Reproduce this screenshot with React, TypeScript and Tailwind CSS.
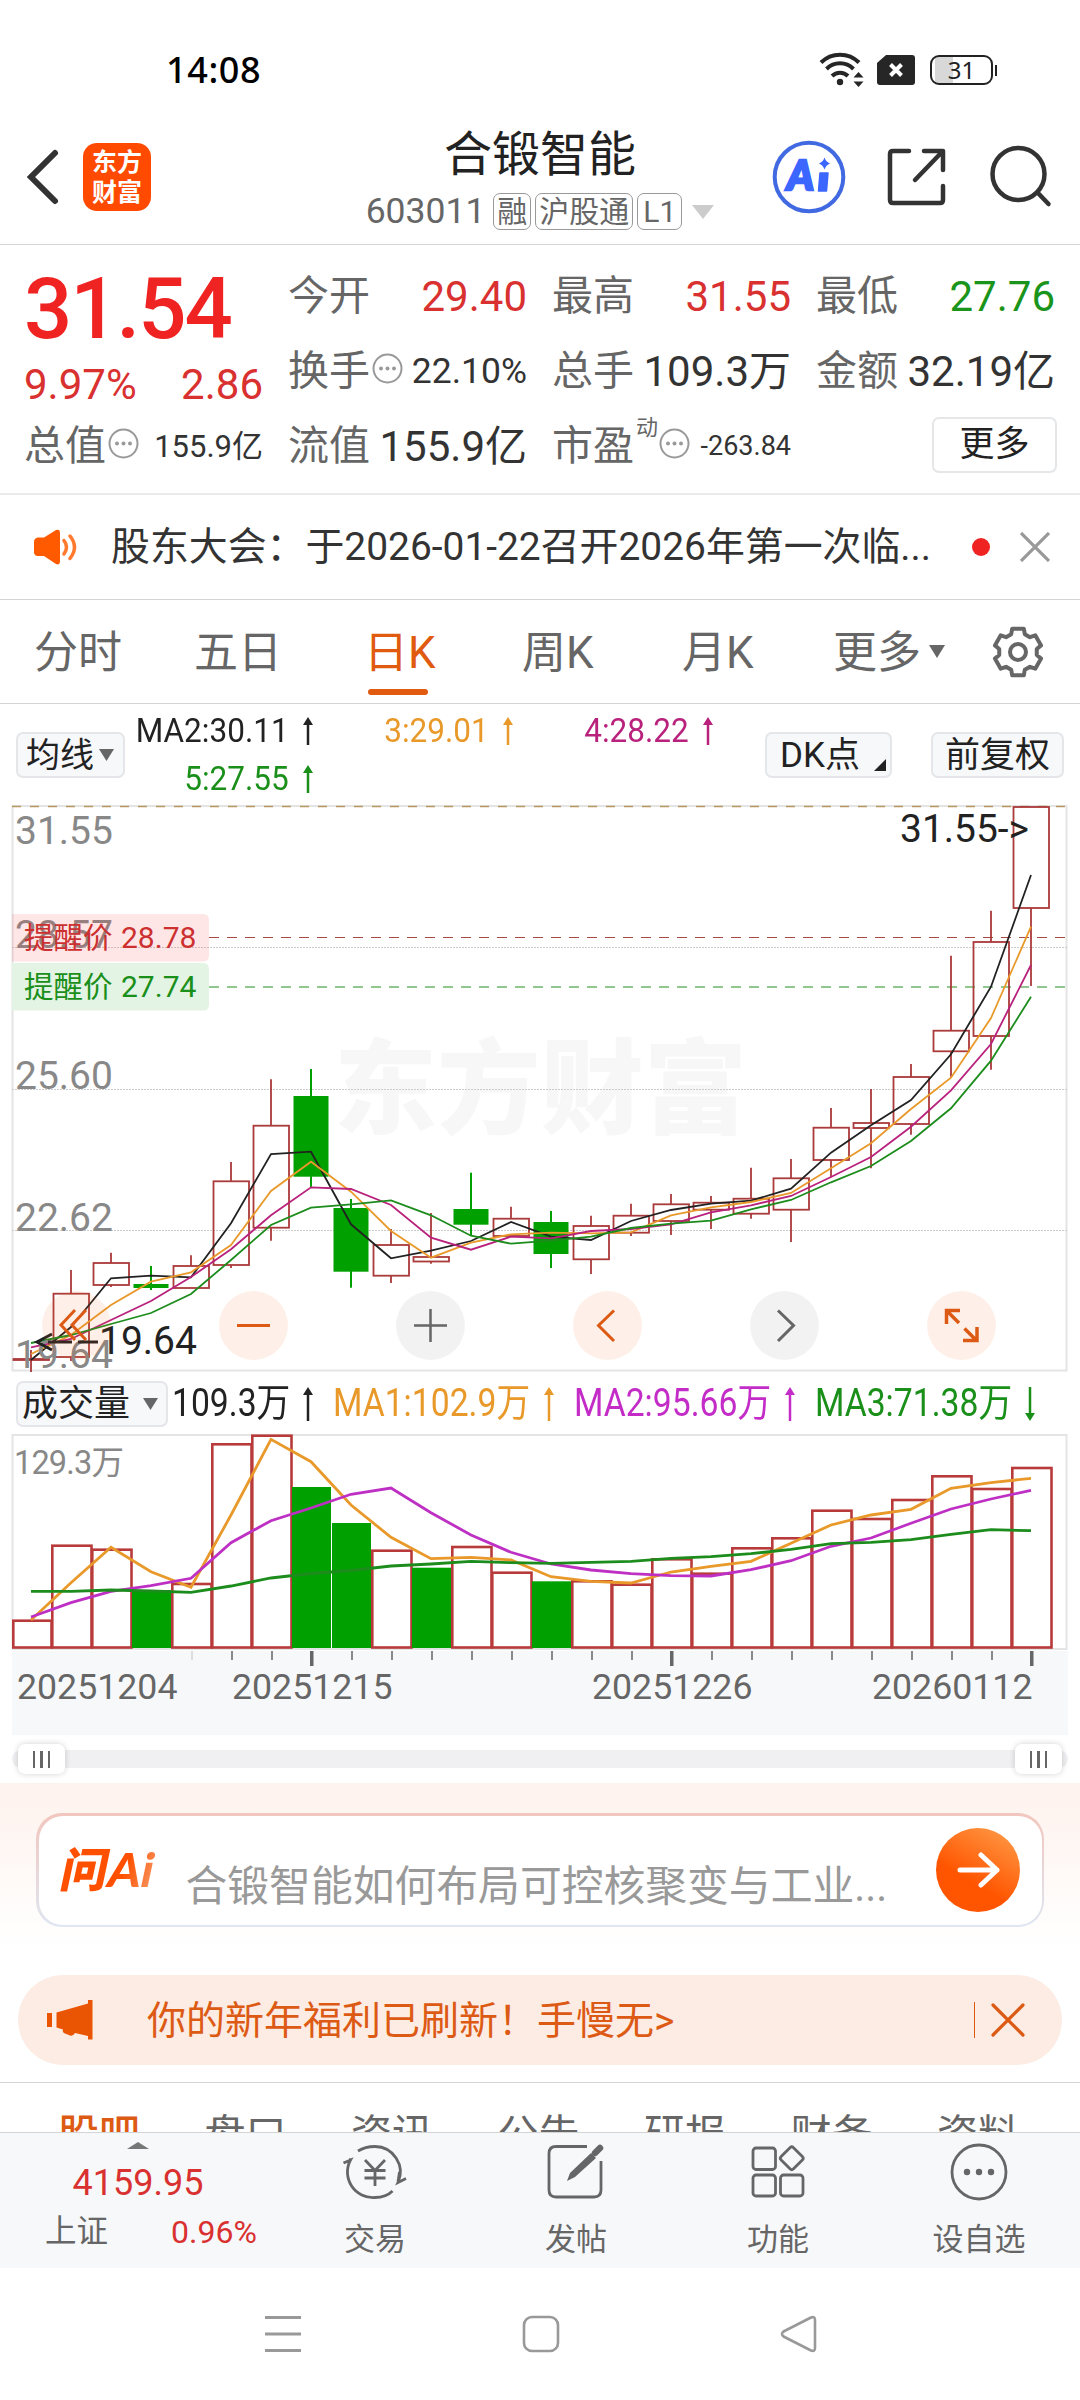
import type { ReactNode } from 'react';

interface Candle {
  high: number;
  top: number;
  bottom: number;
  low: number;
  down?: boolean;
}

// Values are canvas y positions, one entry per trading day
const candles: Candle[] = [
  { high: 1350, top: 1359, bottom: 1360, low: 1372 },
  { high: 1270, top: 1293.7, bottom: 1357, low: 1361 },
  { high: 1252.7, top: 1263, bottom: 1285, low: 1287 },
  { high: 1266, top: 1284, bottom: 1288, low: 1290, down: true },
  { high: 1255.3, top: 1266, bottom: 1288, low: 1288 },
  { high: 1162, top: 1181.3, bottom: 1265, low: 1268 },
  { high: 1079.3, top: 1125.7, bottom: 1227.7, low: 1240.7 },
  { high: 1069, top: 1096, bottom: 1176.7, low: 1187, down: true },
  { high: 1199, top: 1208, bottom: 1271.7, low: 1287.7, down: true },
  { high: 1229, top: 1245, bottom: 1275.7, low: 1283 },
  { high: 1213, top: 1257, bottom: 1261.5, low: 1263.7 },
  { high: 1172.7, top: 1209, bottom: 1224.7, low: 1235.7, down: true },
  { high: 1206.7, top: 1218.7, bottom: 1236, low: 1236 },
  { high: 1211, top: 1222, bottom: 1254, low: 1268, down: true },
  { high: 1215.7, top: 1226, bottom: 1259.3, low: 1274 },
  { high: 1203.7, top: 1215.7, bottom: 1232.7, low: 1236 },
  { high: 1194, top: 1204.3, bottom: 1221, low: 1235 },
  { high: 1196, top: 1202.7, bottom: 1209.7, low: 1229 },
  { high: 1167.7, top: 1198.7, bottom: 1213.7, low: 1218.7 },
  { high: 1159, top: 1178.3, bottom: 1209.7, low: 1242 },
  { high: 1108, top: 1127.7, bottom: 1160, low: 1177.3 },
  { high: 1089, top: 1123, bottom: 1128, low: 1168.3 },
  { high: 1064, top: 1077, bottom: 1124, low: 1134.7 },
  { high: 955.7, top: 1030.7, bottom: 1051.3, low: 1077.3 },
  { high: 910.7, top: 942, bottom: 1036, low: 1069.7 },
  { high: 807, top: 807, bottom: 908, low: 986 },
];

const priceLines = [
  {
    color: '#222222',
    values: [1360, 1327, 1278.3, 1275.7, 1277.3, 1223.3, 1154, 1151.7, 1224.3, 1258.3, 1250.7, 1241, 1222, 1236.7, 1240, 1221, 1210, 1203.7, 1200.7, 1188.7, 1152.7, 1125.3, 1100, 1054.3, 986.7, 875],
  },
  {
    color: '#e8992a',
    values: [1354, 1335, 1305, 1281.7, 1272.3, 1245, 1191, 1161.7, 1191.7, 1231, 1257.7, 1242.7, 1234.3, 1232.7, 1233.3, 1232.3, 1215.3, 1207.3, 1202, 1193, 1168.3, 1143.3, 1109, 1077.7, 1018, 926.7],
  },
  {
    color: '#b8217c',
    values: [1347.3, 1339, 1320, 1301, 1277, 1249.3, 1215.3, 1187.3, 1189, 1205, 1237.7, 1249.7, 1236.7, 1238.3, 1231, 1229, 1224.3, 1212.3, 1205.3, 1196, 1177, 1157, 1126.7, 1090.3, 1044, 965],
  },
  {
    color: '#1c8c1c',
    values: [1343, 1335, 1324, 1313, 1294, 1260, 1225, 1207.7, 1204.3, 1200.3, 1215.3, 1235.7, 1243.7, 1240.7, 1236.7, 1228, 1223.7, 1220.7, 1209.3, 1200, 1182.3, 1166, 1141, 1108.3, 1060.7, 996.7],
  },
];

const volumes = [1620.7, 1545.7, 1549.7, 1590, 1584, 1444.3, 1435.7, 1487, 1523, 1550.7, 1567.7, 1547, 1572.7, 1581.3, 1581.3, 1584.7, 1559.3, 1573.7, 1548.3, 1538.3, 1510.7, 1519, 1500, 1476.3, 1489, 1468];
const volumeDown = [3, 7, 8, 10, 13];

const volumeLines = [
  {
    color: '#e8992a',
    values: [1620, 1582.7, 1547.3, 1571.7, 1587.3, 1515, 1439.3, 1461.7, 1505, 1537.3, 1558.7, 1557.3, 1560, 1576.7, 1581.3, 1583, 1572, 1566.3, 1561.3, 1543.3, 1525, 1515, 1509.3, 1488.3, 1482.7, 1478.3],
  },
  {
    color: '#be30c4',
    values: [1617, 1602.7, 1591.3, 1585.7, 1578.3, 1542.7, 1520.7, 1508, 1494.3, 1488, 1512.7, 1535, 1552.3, 1564, 1570, 1573.7, 1575.7, 1576, 1569.7, 1560.7, 1546.3, 1538, 1523.3, 1509, 1499, 1490.3],
  },
  {
    color: '#1c8c1c',
    values: [1591.3, 1591.3, 1590, 1591, 1592.3, 1586, 1578, 1573.5, 1570.5, 1566, 1564, 1561.3, 1562.7, 1563.3, 1562.3, 1561.3, 1558.3, 1556.7, 1553.7, 1549.3, 1543.7, 1542.3, 1539.7, 1534.3, 1529.7, 1530.7],
  },
];

const cx = (i: number) => 31 + i * 40;
const toPoints = (values: number[]) => values.map((v, i) => `${cx(i)},${v}`).join(' ');

function StatusBar() {
  return (
    <div className="flex h-[92px] items-center justify-between pt-[48px] pr-[83px] pl-[166px]">
      <span className="font-['Noto_Sans'] text-[36px] leading-none font-medium tracking-[0.600px] text-black">14:08</span>
      <div className="flex items-center">
        <svg width="46" height="36" viewBox="0 0 46 36" fill="none" stroke="#262626" strokeWidth="4">
          <path d="M2 10.500a27 27 0 0 1 38 0" />
          <path d="M7.500 17a19 19 0 0 1 27 0" />
          <path d="M13 24a11.500 11.500 0 0 1 16 0" />
          <circle cx="21" cy="30" r="3.200" fill="#262626" stroke="none" />
          <path d="M39.500 20l5 5.500h-10zM39.500 35l5 -5.500h-10z" fill="#262626" stroke="none" />
        </svg>
        <svg className="ml-[12px]" width="38" height="30" viewBox="0 0 38 30">
          <path d="M9 0H35a3 3 0 0 1 3 3V27a3 3 0 0 1 -3 3H3a3 3 0 0 1 -3 -3V8z" fill="#262626" />
          <path d="M13.500 9.500l11 11M24.500 9.500l-11 11" stroke="#fff" strokeWidth="4" />
        </svg>
        <div className="ml-[15px] flex h-[30px] w-[63px] items-center justify-center rounded-[9px] border-2 border-[#222] bg-[linear-gradient(90deg,#fff_3px,#d8d8d8_3px,#d8d8d8_21px,#fff_21px)]">
          <span className="font-['Noto_Sans'] text-[24px] leading-none text-[#222]">31</span>
        </div>
        <div className="ml-[2px] h-[11px] w-[2px] bg-[#222]" />
      </div>
    </div>
  );
}

function Tag({ children }: { children: ReactNode }) {
  return (
    <span className="flex h-[37px] items-center rounded-[7px] border border-[#999] px-[3px] text-[30px] leading-none text-[#666]">
      {children}
    </span>
  );
}

function Header() {
  return (
    <header className="grid h-[153px] grid-cols-[340px_1fr_340px] border-b border-[#d4d4d4]">
      <div className="flex items-center pt-[18px] pl-[25px]">
        <svg width="36" height="58" viewBox="0 0 36 58" fill="none" stroke="#333" strokeWidth="6" strokeLinecap="round">
          <path d="M30 5L6 29l24 24" />
        </svg>
        <div className="ml-[22px] flex h-[68px] w-[68px] flex-col items-center justify-center gap-[5px] rounded-[14px] bg-[#ff4a00] text-[25px] leading-[25px] font-bold text-white">
          <span>东方</span>
          <span>财富</span>
        </div>
      </div>
      <div className="flex flex-col items-center pt-[39px]">
        <h1 className="text-[48px] leading-[48px] whitespace-nowrap text-[#222]">合锻智能</h1>
        <div className="mt-[14px] flex items-center gap-[4px] whitespace-nowrap">
          <span className="mr-[4px] text-[35.500px] leading-none text-[#666]">603011</span>
          <Tag>融</Tag>
          <Tag>沪股通</Tag>
          <Tag>
            <span className="px-[2px]">L1</span>
          </Tag>
          <svg className="ml-[6px]" width="22" height="14" viewBox="0 0 22 14">
            <path d="M0 0h22L11 14z" fill="#ccc" />
          </svg>
        </div>
      </div>
      <div className="flex items-center pt-[18px] pl-[32px]">
        <svg width="74" height="74" viewBox="0 0 74 74">
          <circle cx="37" cy="37" r="34.300" fill="none" stroke="#4169e1" strokeWidth="4" />
          <text x="15" y="49.500" fontFamily="Lato" fontWeight="900" fontStyle="italic" fontSize="41" fill="#3b66ff" stroke="#3b66ff" strokeWidth="2.500">A</text>
          <path d="M48 33h8l-1.500 18h-8z" fill="#3b66ff" stroke="#3b66ff" strokeWidth="1.500" strokeLinejoin="round" />
          <path d="M52.500 17.500q1.500 4.500 5.500 6q-4 1.500 -5.500 6q-1.500 -4.500 -5.500 -6q4 -1.500 5.500 -6z" fill="#3b66ff" />
        </svg>
        <svg className="ml-[41px]" width="60" height="60" viewBox="0 0 60 60" fill="none" stroke="#333" strokeWidth="4.500" strokeLinecap="round" strokeLinejoin="round">
          <path d="M22 4H6q-3 0 -3 3V53q0 3 3 3H53q3 0 3 -3V39" />
          <path d="M37 4H56V23M54 6L28 33" />
        </svg>
        <svg className="ml-[41px]" width="64" height="64" viewBox="0 0 64 64" fill="none" stroke="#333" strokeWidth="4.500" strokeLinecap="round">
          <circle cx="30.500" cy="29" r="26" />
          <path d="M50 48L60.500 59" />
        </svg>
      </div>
    </header>
  );
}

function Dots() {
  return (
    <svg className="shrink-0" width="31" height="31" viewBox="0 0 31 31">
      <circle cx="15.500" cy="15.500" r="14" fill="none" stroke="#999" strokeWidth="2" />
      <g fill="#999">
        <circle cx="9" cy="15.500" r="2" />
        <circle cx="15.500" cy="15.500" r="2" />
        <circle cx="22" cy="15.500" r="2" />
      </g>
    </svg>
  );
}

interface StatProps {
  label: string;
  value: string;
  valueClass?: string;
  dots?: boolean;
}

function Stat({ label, value, valueClass = 'text-[42px] text-[#333]', dots }: StatProps) {
  return (
    <div className="flex h-[75px] items-center whitespace-nowrap">
      <span className="-ml-[1px] text-[41px] leading-none text-[#666]">{label}</span>
      {dots && (
        <span className="mb-[7px] ml-[2px]">
          <Dots />
        </span>
      )}
      <span className={`ml-auto leading-none ${valueClass}`}>{value}</span>
    </div>
  );
}

function QuotePanel() {
  return (
    <section className="grid h-[250px] grid-cols-4 content-start gap-x-[26px] border-b-2 border-[#ebebeb] px-[25px] pt-[14px]">
      <div className="row-span-2 h-[150px]">
        <div className="-ml-[1px] pt-[12px] text-[85px] leading-[76px] font-medium tracking-[-2px] text-[#f02323]">31.54</div>
        <div className="-ml-[1px] flex justify-between pt-[17px] text-[42px] leading-[42px] text-[#d93030]">
          <span>9.97%</span>
          <span>2.86</span>
        </div>
      </div>
      <Stat label="今开" value="29.40" valueClass="text-[42px] text-[#d93030]" />
      <Stat label="最高" value="31.55" valueClass="text-[42px] text-[#d93030]" />
      <Stat label="最低" value="27.76" valueClass="text-[42px] text-[#1a941a]" />
      <Stat label="换手" value="22.10%" valueClass="text-[35.500px] text-[#333]" dots />
      <Stat label="总手" value="109.3万" />
      <Stat label="金额" value="32.19亿" />
      <Stat label="总值" value="155.9亿" valueClass="text-[31px] text-[#333]" dots />
      <Stat label="流值" value="155.9亿" />
      <div className="flex h-[75px] items-center">
        <span className="-ml-[1px] text-[41px] leading-none text-[#666]">市盈</span>
        <span className="mb-[38px] ml-[2px] text-[22px] leading-none text-[#666]">动</span>
        <span className="mb-[7px] ml-[1px]">
          <Dots />
        </span>
        <span className="ml-auto text-[27px] leading-none text-[#333]">-263.84</span>
      </div>
      <div className="flex h-[75px] items-center justify-end">
        <button className="-mr-[2px] mb-[4px] h-[56px] w-[125px] rounded-[7px] border-2 border-[#e4e6e8] text-[35px] leading-none text-[#222]">更多</button>
      </div>
    </section>
  );
}

function NewsBar() {
  return (
    <section className="flex h-[105px] items-center border-b border-[#d4d4d4] pl-[33px]">
      <svg width="46" height="36" viewBox="0 0 46 36">
        <path d="M1 13q0 -4 4 -4.500h6L23 1q4 -1.500 4 3V32q0 4.500 -4 3L11 27H5q-4 0 -4 -4z" fill="#ff5a00" />
        <path d="M31 11.500q5 6.500 0 13.500M37 7q9 11 0 22.500" fill="none" stroke="#ff7a2e" strokeWidth="3.500" strokeLinecap="round" />
      </svg>
      <span className="ml-[32px] w-[830px] text-[38.900px] leading-none whitespace-nowrap text-[#333]">股东大会：于2026-01-22召开2026年第一次临...</span>
      <span className="ml-[31px] h-[18px] w-[18px] rounded-full bg-[#f02323]" />
      <svg className="ml-[30px]" width="30" height="30" viewBox="0 0 30 30" stroke="#999" strokeWidth="3.200">
        <path d="M1 1l28 28M29 1L1 29" />
      </svg>
    </section>
  );
}

function Gear() {
  const pts: string[] = [];
  for (let k = 0; k < 6; k++) {
    for (const [r, d] of [[19, -21], [24, -14], [24, 14], [19, 21]]) {
      const a = ((k * 60 - 90 + d) * Math.PI) / 180;
      pts.push(`${26 + r * Math.cos(a)},${26 + r * Math.sin(a)}`);
    }
  }
  return (
    <svg width="52" height="52" viewBox="0 0 52 52" fill="none" stroke="#666" strokeWidth="4" strokeLinejoin="round">
      <polygon points={pts.join(' ')} />
      <circle cx="26" cy="26" r="8" />
    </svg>
  );
}

function PeriodTabs() {
  return (
    <nav className="flex h-[104px] items-center border-b border-[#d4d4d4] text-[44px] leading-none whitespace-nowrap text-[#666]">
      <span className="mt-[3px] ml-[34px] w-[160px]">分时</span>
      <span className="mt-[3px] w-[170px]">五日</span>
      <span className="relative mt-[3px] w-[158px] text-[#e05a10]">
        日K
        <i className="absolute top-[58px] left-[4px] h-[6px] w-[60px] rounded-full bg-[#e05a10]" />
      </span>
      <span className="mt-[3px] w-[160px]">周K</span>
      <span className="mt-[3px] w-[151px]">月K</span>
      <span className="mt-[3px] w-[96px]">更多</span>
      <svg width="16" height="13" viewBox="0 0 16 13">
        <path d="M0 0h16L8 13z" fill="#666" />
      </svg>
      <span className="ml-[47px]">
        <Gear />
      </span>
    </nav>
  );
}

function Arrow({ h, down }: { h: number; down?: boolean }) {
  return (
    <svg className={down ? 'shrink-0 rotate-180' : 'shrink-0'} width="10" height={h} viewBox={`0 0 10 ${h}`}>
      <path d="M5 0l5 8H0z" fill="currentColor" />
      <path d={`M5 4V${h}`} stroke="currentColor" strokeWidth="2.500" />
    </svg>
  );
}

function MaItem({ text, className }: { text: string; className: string }) {
  return (
    <div className={`flex h-[48px] items-center justify-end gap-[14px] text-[32.500px] leading-none whitespace-nowrap ${className}`}>
      <span className="origin-right scale-x-[0.97]">{text}</span>
      <Arrow h={28} />
    </div>
  );
}

function MaRow() {
  const chip = 'flex h-[46px] items-center rounded-[7px] border-2 border-[#e4e6ea] bg-[#f7f8fa] text-[35px] leading-none whitespace-nowrap text-[#222]';
  return (
    <section className="flex h-[100px] pl-[16px]">
      <div className={`${chip} mt-[28px] w-[109px] pl-[8px]`}>
        <span className="text-[34px]">均线</span>
        <svg className="ml-[5px]" width="15" height="12" viewBox="0 0 15 12">
          <path d="M0 0h15L7.500 12z" fill="#666" />
        </svg>
      </div>
      <div className="-ml-[12px] grid h-[96px] w-[600px] grid-cols-3 pt-[3px]">
        <MaItem text="MA2:30.11" className="text-[#222]" />
        <MaItem text="3:29.01" className="text-[#e8992a]" />
        <MaItem text="4:28.22" className="text-[#b8217c]" />
        <MaItem text="5:27.55" className="text-[#1a8f1a]" />
      </div>
      <div className={`${chip} mt-[28px] ml-[52px] w-[127px] justify-between pr-[4px] pl-[13px]`}>
        <span>DK点</span>
        <svg className="mt-[20px]" width="12" height="12" viewBox="0 0 12 12">
          <path d="M12 0V12H0z" fill="#222" />
        </svg>
      </div>
      <div className={`${chip} mt-[28px] ml-[39px] w-[133px] justify-center`}>前复权</div>
    </section>
  );
}

function CircleButton({ gray, children }: { gray?: boolean; children: ReactNode }) {
  return (
    <button className={gray ? 'h-[69px] w-[69px] rounded-full bg-black/5 text-[#666]' : 'h-[69px] w-[69px] rounded-full bg-[#f26a1b]/10 text-[#dd5a14]'}>
      <svg width="69" height="69" viewBox="0 0 69 69" fill="none" stroke="currentColor" strokeWidth="3">
        {children}
      </svg>
    </button>
  );
}

function PriceChart() {
  return (
    <section className="relative h-[568px]">
      <svg className="block" width="1080" height="568" viewBox="0 804 1080 568" fontFamily="Roboto, 'Noto Sans CJK SC', sans-serif">
        <text x="334" y="1126" fontSize="103" fontWeight="900" fill="#f7f7f7" textLength="413">东方财富</text>
        <g fill="none" stroke="#e4e4e4" strokeWidth="2">
          <rect x="12.500" y="806" width="1054" height="564.500" />
        </g>
        <path d="M12 947.500H1067M12 1089.500H1067M12 1230.500H1067" stroke="#cccccc" strokeWidth="1" strokeDasharray="2 1" />
        <path d="M12 806.500H1067" stroke="#b89660" strokeWidth="1.500" strokeDasharray="9 9" />
        <path d="M209 937.500H1066" stroke="#a84a42" strokeWidth="1.200" strokeDasharray="10 8" />
        <path d="M209 987H1066" stroke="#6cb46c" strokeWidth="1.500" strokeDasharray="10 8" />
        {candles.map((c, i) => {
          const x = cx(i);
          return c.down ? (
            <g key={i} fill="#00a000">
              <rect x={x - 1} y={c.high} width="2" height={c.low - c.high} />
              <rect x={x - 17.5} y={c.top} width="35" height={c.bottom - c.top} />
            </g>
          ) : (
            <g key={i} fill="none" stroke="#ab3a3a" strokeWidth="1.800">
              <path d={`M${x} ${c.high}V${c.top}M${x} ${c.bottom}V${c.low}`} />
              <rect x={x - 17.5} y={c.top} width="35.500" height={c.bottom - c.top} />
            </g>
          );
        })}
        {priceLines.map((line) => (
          <polyline key={line.color} points={toPoints(line.values)} fill="none" stroke={line.color} strokeWidth="1.800" />
        ))}
        <g fontSize="39" fill="#888888">
          <text x="15" y="844">31.55</text>
          <text x="15" y="947.500">28.57</text>
          <text x="15" y="1089">25.60</text>
          <text x="15" y="1230.500">22.62</text>
          <text x="15" y="1368">19.64</text>
        </g>
        <path d="M12 914H203q6 0 6 6V955.500q0 6 -6 6H12z" fill="#ff5050" fillOpacity="0.140" />
        <path d="M12 963H203q6 0 6 6V1004.500q0 6 -6 6H12z" fill="#e3f4e4" />
        <g fontSize="29.500">
          <text x="24" y="947.500" fill="#cc3030">提醒价</text>
          <text x="121" y="947.500" fontSize="30" fill="#cc3030">28.78</text>
          <text x="24" y="997" fill="#1a8f1a">提醒价</text>
          <text x="121" y="997" fontSize="30" fill="#1a8f1a">27.74</text>
        </g>
        <g fontSize="39" fill="#222222">
          <text x="900" y="842" textLength="129">31.55-&gt;</text>
          <text x="99" y="1353.500">19.64</text>
        </g>
        <path d="M52 1334L37 1342l15 8M48 1342H72M78 1342H98" fill="none" stroke="#222" strokeWidth="3" />
      </svg>
      <div className="absolute top-[487px] left-[42px] flex gap-[108px]">
        <CircleButton>
          <path d="M33 19L19 34l14 15M44 19L30 34l14 15" />
        </CircleButton>
        <CircleButton>
          <path d="M18 34.500H51" />
        </CircleButton>
        <CircleButton gray>
          <path d="M18 34.500H51M34.500 18V51" strokeWidth="2.500" />
        </CircleButton>
        <CircleButton>
          <path d="M41 19.500L25.500 34.500l15.500 15.500" />
        </CircleButton>
        <CircleButton gray>
          <path d="M28 19.500l15.500 15L28 50" />
        </CircleButton>
        <CircleButton>
          <path d="M19.500 33V19.500H33M20 20l12 12M50 36v13.500H36M49.500 49.500l-12 -12" strokeWidth="3.500" />
        </CircleButton>
      </div>
    </section>
  );
}

function VolumeHeader() {
  return (
    <section className="flex h-[62px] items-center pt-[1px] pl-[16px] text-[38.500px] leading-none whitespace-nowrap">
      <div className="flex h-[46px] w-[152px] items-center justify-between rounded-[7px] border-2 border-[#e4e6ea] bg-[#f7f8fa] pr-[8px] pl-[4px] text-[36px] text-[#222]">
        成交量
        <svg width="15" height="12" viewBox="0 0 15 12">
          <path d="M0 0h15L7.500 12z" fill="#666" />
        </svg>
      </div>
      <div className="ml-[4px] flex w-[161px] items-center text-[#222]">
        <span className="w-[131px] origin-left scale-x-[0.875]">109.3万</span>
        <Arrow h={34} />
      </div>
      <div className="flex w-[241px] items-center text-[#e8992a]">
        <span className="w-[211px] origin-left scale-x-[0.875]">MA1:102.9万</span>
        <Arrow h={34} />
      </div>
      <div className="flex w-[241px] items-center text-[#c42cc8]">
        <span className="w-[211px] origin-left scale-x-[0.875]">MA2:95.66万</span>
        <Arrow h={34} />
      </div>
      <div className="flex items-center text-[#1a8f1a]">
        <span className="w-[210px] origin-left scale-x-[0.875]">MA3:71.38万</span>
        <Arrow h={34} down />
      </div>
    </section>
  );
}

function VolumeChart() {
  return (
    <svg className="block" width="1080" height="302" viewBox="0 1434 1080 302" fontFamily="Roboto, 'Noto Sans CJK SC', sans-serif">
      <rect x="12.500" y="1435" width="1054" height="214" fill="none" stroke="#e4e4e4" strokeWidth="2" />
      <rect x="12" y="1651" width="1056" height="84" fill="#f7f8fa" />
      {volumes.map((v, i) =>
        volumeDown.includes(i) ? (
          <rect key={i} x={cx(i) - 19} y={v} width="39" height={1648 - v} fill="#00a000" />
        ) : (
          <rect key={i} x={cx(i) - (i === 0 ? 17.7 : 18.7)} y={v} width={i === 0 ? 38.2 : 39.2} height={1647.5 - v} fill="none" stroke="#b83a3a" strokeWidth="2.600" />
        ),
      )}
      {volumeLines.map((line) => (
        <polyline key={line.color} points={toPoints(line.values)} fill="none" stroke={line.color} strokeWidth="2.800" />
      ))}
      {volumes.map((_, i) => {
        if (i < 4) return null;
        const major = i === 7 || i === 16 || i === 25;
        return (
          <rect
            key={i}
            x={major ? cx(i) - 1 : cx(i)}
            y="1651"
            width={major ? 3.5 : 2}
            height={major ? 15 : 9}
            fill={i === 4 ? '#dddddd' : major ? '#666666' : '#888888'}
          />
        );
      })}
      <text x="14" y="1474" fontSize="32.500" fill="#888888" textLength="110">129.3万</text>
      <g fontSize="35.700" fill="#666666">
        <text x="17" y="1699">20251204</text>
        <text x="232" y="1699">20251215</text>
        <text x="592" y="1699">20251226</text>
        <text x="872" y="1699">20260112</text>
      </g>
    </svg>
  );
}

function Handle() {
  return (
    <div className="flex h-[30px] w-[47px] items-center justify-center gap-[5px] rounded-[7px] bg-white shadow-[0_0_6px_rgba(0,0,0,0.18)]">
      <i className="h-[17px] w-[2.500px] bg-[#666]" />
      <i className="h-[17px] w-[2.500px] bg-[#666]" />
      <i className="h-[17px] w-[2.500px] bg-[#666]" />
    </div>
  );
}

function RangeSlider() {
  return (
    <div className="flex h-[47px] items-center px-[12px] pb-[1px]">
      <div className="flex h-[18px] w-full items-center justify-between rounded-full bg-[#f0f0f3] px-[6px]">
        <Handle />
        <Handle />
      </div>
    </div>
  );
}

function AskAi() {
  return (
    <section className="h-[192px] bg-[linear-gradient(180deg,#fef2ed_0px,#ffffff_165px)] px-[36px] pt-[30px]">
      <div className="h-[114px] rounded-[26px] bg-[linear-gradient(180deg,#f2c6be,#dfe6f2)] p-[2.500px]">
        <div className="flex h-full items-center rounded-[24px] bg-white pr-[22px] pl-[23px] whitespace-nowrap">
          <div className="mb-[3px] w-[125px] -skew-x-12 bg-[linear-gradient(100deg,#ff5000_50%,#f7a06f_80%)] bg-clip-text font-['Lato','Noto_Sans_CJK_SC',sans-serif] text-[47px] leading-[60px] font-black text-transparent">
            问Ai
          </div>
          <span className="mt-[33px] -ml-[1px] text-[41.800px] leading-none text-[#999]">合锻智能如何布局可控核聚变与工业...</span>
          <div className="ml-auto flex h-[84px] w-[84px] shrink-0 items-center justify-center rounded-full bg-[linear-gradient(210deg,#ff9440_10%,#ff5500_62%)]">
            <svg width="44" height="36" viewBox="0 0 44 36" fill="none" stroke="#fff" strokeWidth="5" strokeLinecap="round" strokeLinejoin="round">
              <path d="M4 18H41M25 3l16 15l-16 15" />
            </svg>
          </div>
        </div>
      </div>
    </section>
  );
}

function Promo() {
  return (
    <section className="h-[108px] border-b border-[#d4d4d4] px-[18px]">
      <div className="flex h-[90px] items-center rounded-full bg-[#fcece3] pl-[29px] text-[#dd5a14]">
        <svg width="46" height="40" viewBox="0 0 46 40" fill="#ea5504">
          <path d="M0 13h5v14H0zM9.500 12.500L41 3.500V0h4.500v39.500H41V36l-13 -3q-2 3.500 -5 2.500l-5 -2q-3 -1 -2 -4l-6.500 -2z" />
        </svg>
        <span className="mt-[2px] ml-[54px] text-[39px] leading-none whitespace-nowrap">你的新年福利已刷新！手慢无&gt;</span>
        <i className="ml-auto h-[36px] w-[1px] bg-[#dd5a14]" />
        <svg className="mr-[37px] ml-[16px]" width="34" height="34" viewBox="0 0 34 34" stroke="#dd5a14" strokeWidth="3.200" strokeLinecap="round">
          <path d="M2 2l30 30M32 2L2 32" />
        </svg>
      </div>
    </section>
  );
}

function SectionTabs() {
  const tabs = ['股吧', '盘口', '资讯', '公告', '研报', '财务', '资料'];
  return (
    <div className="flex h-[49px] gap-[64.500px] overflow-hidden pt-[32px] pl-[58px] text-[41px] leading-[41px] whitespace-nowrap text-[#666]">
      {tabs.map((t, i) => (
        <span key={t} className={i === 0 ? 'w-[82px] shrink-0 font-medium text-[#dd5a14]' : 'w-[82px] shrink-0'}>
          {t}
        </span>
      ))}
    </div>
  );
}

function BarItem({ label, className, children }: { label: string; className: string; children: ReactNode }) {
  return (
    <div className={`flex w-[110px] flex-col items-center pt-[7px] ${className}`}>
      <svg width="66" height="64" viewBox="0 0 66 64" fill="none" stroke="#666" strokeWidth="2.800">
        {children}
      </svg>
      <span className="mt-[20px] text-[31px] leading-none whitespace-nowrap text-[#666]">{label}</span>
    </div>
  );
}

function BottomBar() {
  return (
    <footer className="flex h-[136px] border-t border-[#d4d4d4] bg-[#f7f8fa]">
      <div className="flex w-[276px] flex-col items-center pt-[9px] text-[#d93030]">
        <svg width="22" height="7" viewBox="0 0 22 7">
          <path d="M11 0L22 7H0z" fill="#777" />
        </svg>
        <span className="mt-[16px] text-[36px] leading-[36px]">4159.95</span>
        <div className="mt-[15px] flex w-full items-center pl-[45px] leading-none">
          <span className="w-[126px] text-[31.500px] text-[#666]">上证</span>
          <span className="text-[32px]">0.96%</span>
        </div>
      </div>
      <BarItem label="交易" className="ml-[44px]">
        <path d="M16 11Q23 6.500 33 6.500a25.500 25.500 0 0 1 23 36l8 -4M56 42l1.500 -10M50.500 51Q44 57.500 33 57.500A25.500 25.500 0 0 1 8.500 20l-7 3M8.500 20l-1.500 -1" />
        <path d="M23 20l10 10.500L43 20M33 30.500V46M22.500 30.500H43.500M22.500 38H43.500" />
      </BarItem>
      <BarItem label="发帖" className="ml-[91px]">
        <path d="M44 6.500H13q-7 0 -7 7V50q0 7 7 7H51q7 0 7 -7V21" />
        <path d="M24 41l3 -8L48 13l5 5L32 37z" fill="#666" stroke="none" />
        <path d="M52 13l5 -5" strokeWidth="6.500" strokeLinecap="round" />
      </BarItem>
      <BarItem label="功能" className="ml-[92px]">
        <rect x="8" y="8" width="22.500" height="21.500" rx="3" />
        <rect x="8" y="35" width="22.500" height="21" rx="3" />
        <rect x="35.500" y="35" width="22.500" height="21" rx="3" />
        <rect x="38" y="9.500" width="17.500" height="17.500" rx="2.500" transform="rotate(45 46.750 18.250)" />
      </BarItem>
      <BarItem label="设自选" className="ml-[91px]">
        <circle cx="33" cy="32" r="27" />
        <g fill="#666" stroke="none">
          <circle cx="21" cy="32" r="3.200" />
          <circle cx="33" cy="32" r="3.200" />
          <circle cx="45" cy="32" r="3.200" />
        </g>
      </BarItem>
    </footer>
  );
}

function SystemNav() {
  return (
    <div className="flex h-[132px] items-center justify-between pr-[262px] pl-[264px]">
      <svg width="38" height="38" viewBox="0 0 38 38" stroke="#999" strokeWidth="3">
        <path d="M1 2.500H37M1 19H37M1 35.500H37" />
      </svg>
      <svg width="38" height="38" viewBox="0 0 38 38" fill="none" stroke="#999" strokeWidth="2.600">
        <rect x="2" y="2" width="34" height="34" rx="8" />
      </svg>
      <svg width="38" height="38" viewBox="0 0 38 38" fill="none" stroke="#999" strokeWidth="2.600" strokeLinejoin="round">
        <path d="M31 2.500q4 -1.500 4 2.500V33q0 4 -4 2.500L3.500 21.500q-3 -2.500 0 -5z" />
      </svg>
    </div>
  );
}

export default function App() {
  return (
    <main className="h-[2400px] w-[1080px] overflow-hidden bg-white font-['Roboto','Noto_Sans_CJK_SC',sans-serif]">
      <StatusBar />
      <Header />
      <QuotePanel />
      <NewsBar />
      <PeriodTabs />
      <MaRow />
      <PriceChart />
      <VolumeHeader />
      <VolumeChart />
      <RangeSlider />
      <AskAi />
      <Promo />
      <SectionTabs />
      <BottomBar />
      <SystemNav />
    </main>
  );
}
